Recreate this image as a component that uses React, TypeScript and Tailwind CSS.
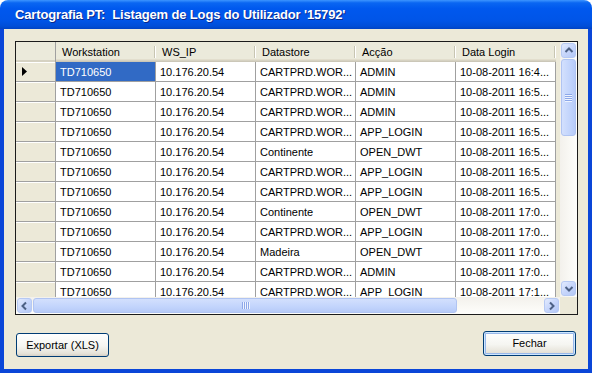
import { ReactNode } from 'react';

const cols = ['Workstation', 'WS_IP', 'Datastore', 'Acção', 'Data Login'];

const rows: [string, string, string][] = [
  ['CARTPRD.WOR...', 'ADMIN', '10-08-2011 16:4...'],
  ['CARTPRD.WOR...', 'ADMIN', '10-08-2011 16:5...'],
  ['CARTPRD.WOR...', 'ADMIN', '10-08-2011 16:5...'],
  ['CARTPRD.WOR...', 'APP_LOGIN', '10-08-2011 16:5...'],
  ['Continente', 'OPEN_DWT', '10-08-2011 16:5...'],
  ['CARTPRD.WOR...', 'APP_LOGIN', '10-08-2011 16:5...'],
  ['CARTPRD.WOR...', 'APP_LOGIN', '10-08-2011 16:5...'],
  ['Continente', 'OPEN_DWT', '10-08-2011 17:0...'],
  ['CARTPRD.WOR...', 'APP_LOGIN', '10-08-2011 17:0...'],
  ['Madeira', 'OPEN_DWT', '10-08-2011 17:0...'],
  ['CARTPRD.WOR...', 'ADMIN', '10-08-2011 17:0...'],
  ['CARTPRD.WOR...', 'APP_LOGIN', '10-08-2011 17:1...'],
];

function Arrow({ dir }: { dir: 'up' | 'down' | 'left' | 'right' }) {
  const pts = {
    up: '1.5,6 5,2.5 8.5,6',
    down: '1.5,3 5,6.5 8.5,3',
    left: '6,1.5 2.5,5 6,8.5',
    right: '3,1.5 6.5,5 3,8.5',
  }[dir];
  return (
    <svg width="10" height="10" viewBox="0 0 10 10">
      <polyline points={pts} fill="none" stroke="#4D6185" strokeWidth="2" />
    </svg>
  );
}

function ScrollBtn({ dir }: { dir: 'up' | 'down' | 'left' | 'right' }) {
  return (
    <div className="w-[17px] h-[17px] p-[1px] shrink-0">
      <div className="w-full h-full rounded-[3px] border border-[#B6C9F3] bg-[linear-gradient(135deg,#E3EBFE_0%,#C7D6FB_50%,#B4C8F6_100%)] flex items-center justify-center">
        <Arrow dir={dir} />
      </div>
    </div>
  );
}

function Grip({ vertical }: { vertical: boolean }) {
  const lines = [0, 1, 2, 3];
  return (
    <div className={vertical ? 'flex flex-col gap-[1px]' : 'flex gap-[1px]'}>
      {lines.map((i) => (
        <div
          key={i}
          className={
            vertical
              ? 'w-[7px] h-[1px] bg-[#8DA8E9] shadow-[0_1px_0_#EEF3FE]'
              : 'w-[1px] h-[7px] bg-[#8DA8E9] shadow-[1px_0_0_#EEF3FE]'
          }
        />
      ))}
    </div>
  );
}

function Cell({ children, selected }: { children: ReactNode; selected?: boolean }) {
  return (
    <div
      className={`w-[100px] h-[20px] shrink-0 border-r border-b border-[#A0A0A0] pl-[4px] pt-[1px] flex items-center whitespace-nowrap overflow-hidden ${
        selected ? 'bg-[#316AC5] text-white' : 'bg-white text-black'
      }`}
    >
      {children}
    </div>
  );
}

function Grid() {
  return (
    <div className="w-[563px] h-[274px] border border-[#1B1B1B] flex bg-[#ECE9D8]">
      <div className="w-[544px] flex flex-col">
        <div className="h-[255px] overflow-hidden">
          {/* header */}
          <div className="flex h-[20px]">
            <div className="w-[40px] h-[20px] shrink-0 bg-[#EBEADB] border-r border-[#A0A0A0] shadow-[inset_0_-2px_0_#D6D2C2]" />
            {cols.map((c) => (
              <div
                key={c}
                className="relative w-[100px] h-[20px] shrink-0 bg-[#EBEADB] shadow-[inset_0_-1px_0_#CBC7B8,inset_0_-2px_0_#D6D2C2,inset_0_-3px_0_#E2DECD] pl-[6px] flex items-center text-black"
              >
                {c}
                <div className="absolute right-[1px] top-[4px] h-[12px] w-[1px] bg-[#C7C5B2] shadow-[1px_0_0_#FFFFFF]" />
              </div>
            ))}
          </div>
          {rows.map((r, i) => (
            <div key={i} className="flex h-[20px]">
              <div className="w-[40px] h-[20px] shrink-0 bg-[#ECE9D8] border-r border-b border-[#A0A0A0] shadow-[inset_0_1px_0_#FFFFFF] flex items-center pl-[6px]">
                {i === 0 && (
                  <svg width="5" height="9" viewBox="0 0 5 9">
                    <polygon points="0,0 5,4.5 0,9" fill="#000" />
                  </svg>
                )}
              </div>
              <Cell selected={i === 0}>TD710650</Cell>
              <Cell>10.176.20.54</Cell>
              <Cell>{r[0]}</Cell>
              <Cell>{r[1]}</Cell>
              <Cell>{r[2]}</Cell>
            </div>
          ))}
        </div>
        {/* horizontal scrollbar */}
        <div className="h-[17px] flex bg-[linear-gradient(to_bottom,#F3F1EC,#FEFEFB)]">
          <ScrollBtn dir="left" />
          <div className="flex-1 py-[1px] pr-[86px]">
            <div className="h-full rounded-[3px] border border-[#B0C4F2] bg-[linear-gradient(to_bottom,#D3E0FD,#C2D4FC_60%,#B7CBF8)] flex items-center justify-center">
              <Grip vertical={false} />
            </div>
          </div>
          <ScrollBtn dir="right" />
        </div>
      </div>
      <div className="w-[17px] flex flex-col">
        <div className="h-[255px] flex flex-col bg-[linear-gradient(to_right,#F3F1EC,#FEFEFB)]">
          <ScrollBtn dir="up" />
          <div className="flex-1 px-[1px] pb-[144px]">
            <div className="h-full rounded-[3px] border border-[#B0C4F2] bg-[linear-gradient(to_right,#D3E0FD,#C2D4FC_60%,#B7CBF8)] flex items-center justify-center">
              <Grip vertical />
            </div>
          </div>
          <ScrollBtn dir="down" />
        </div>
        <div className="h-[17px] bg-[#ECE9D8]" />
      </div>
    </div>
  );
}

function XpButton({ label, isDefault }: { label: string; isDefault?: boolean }) {
  return (
    <button
      className={`w-[93px] rounded-[3px] border border-[#003C74] bg-[linear-gradient(to_bottom,#FFFFFF_0%,#F5F5F1_55%,#E6E3D9_88%,#D6D0C5_100%)] text-[11px] text-black flex items-center justify-center ${
        isDefault
          ? 'h-[25px] shadow-[inset_0_0_0_1px_#CEE7FF,inset_0_0_0_2px_#98B8EA]'
          : 'h-[24px] mt-[2px]'
      }`}
    >
      {label}
    </button>
  );
}

export default function App() {
  return (
    <div className="w-[592px] h-[373px] flex flex-col rounded-t-[8px] overflow-hidden font-['Liberation_Sans',Arial,sans-serif] text-[11px]">
      <div className="h-[29px] shrink-0 bg-[linear-gradient(to_bottom,#3D95FF_0%,#0A66F2_10%,#0058EE_30%,#0055E8_70%,#004ED8_90%,#0043C4_100%)] flex items-center pl-[15px] pt-[1px]">
        <span className="text-white font-bold text-[13px] tracking-[-0.15px] whitespace-pre [text-shadow:1px_1px_0_#0A2A8C]">
          Cartografia PT:  Listagem de Logs do Utilizador '15792'
        </span>
      </div>
      <div className="flex-1 flex flex-col bg-[#0A46D8] px-[4px] pb-[4px]">
        <div className="flex-1 bg-[#ECE9D8] pl-[11px] pr-[10px] pt-[12px] flex flex-col">
          <Grid />
          <div className="mt-[16px] flex justify-between items-start pl-[1px] pr-[2px]">
            <XpButton label="Exportar (XLS)" />
            <XpButton label="Fechar" isDefault />
          </div>
        </div>
      </div>
    </div>
  );
}
